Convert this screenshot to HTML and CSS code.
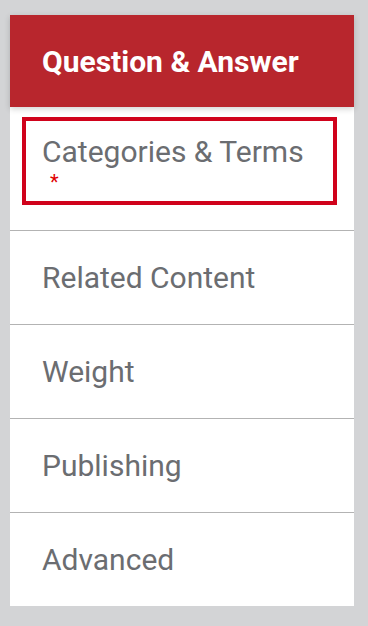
FILE: index.html
```html
<!DOCTYPE html>
<html>
<head>
<meta charset="utf-8">
<link rel="stylesheet" href="styles.css">
</head>
<body>
<div class="panel">
  <div class="header">Question &amp; Answer</div>
  <div class="item item-active">
    <div class="active-box">
      <span class="label">Categories &amp; Terms</span>
      <span class="req">*</span>
    </div>
  </div>
  <div class="item"><span class="label">Related Content</span></div>
  <div class="item"><span class="label">Weight</span></div>
  <div class="item"><span class="label">Publishing</span></div>
  <div class="item item-last"><span class="label">Advanced</span></div>
</div>
</body>
</html>
```
FILE: styles.css
```css
html, body {
  margin: 0;
  padding: 0;
  background: #d3d4d6;
}
body {
  padding: 15px 14px 21px 10px;
  font-family: Roboto, "Liberation Sans", sans-serif;
}
.panel {
  width: 344px;
  background: #ffffff;
}
.header {
  height: 92px;
  background: #b8262d;
  color: #ffffff;
  font-weight: 700;
  font-size: 30px;
  display: flex;
  align-items: center;
  padding-left: 32px;
  box-shadow: 0 2px 6px rgba(0,0,0,0.18);
  position: relative;
}
.item {
  border-bottom: 1px solid #b3b3b3;
  display: flex;
  align-items: center;
  padding-left: 32px;
  box-sizing: border-box;
  height: 94px;
}
.item-last {
  border-bottom: none;
  height: 93px;
}
.item-active {
  height: 124px;
  padding: 10px 17px 25px 12px;
  align-items: stretch;
}
.active-box {
  flex: 1;
  border: 4px solid #d0021b;
  padding: 16px 0 0 16px;
  display: flex;
  flex-direction: column;
}
.label {
  font-size: 30px;
  color: #6b6d71;
  line-height: 30px;
}
.req {
  color: #e00000;
  font-size: 20px;
  line-height: 20px;
  margin-top: 5px;
  padding-left: 8px;
}
```
